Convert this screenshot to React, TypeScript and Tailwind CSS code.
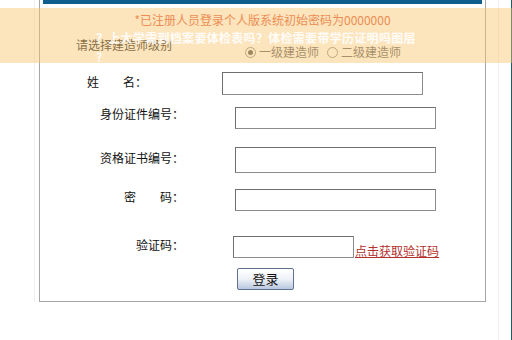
import React from 'react';

const font = { fontFamily: '"Noto Sans CJK SC", "Liberation Sans", sans-serif' };

const inputCls = 'border border-[#8c8c8c] border-t-[#6f6f6f] border-l-[#6f6f6f] bg-white';

const Radio = ({ checked }: { checked?: boolean }) => (
  <span className="inline-flex w-[11px] h-[11px] rounded-full border border-[#8e8e8e] bg-white items-center justify-center mr-[3px]">
    {checked && <span className="w-[5px] h-[5px] rounded-full bg-[#555]" />}
  </span>
);

export default function App() {
  return (
    <div className="relative w-[512px] h-[340px] bg-white overflow-hidden text-[12px]" style={font}>
      {/* login box */}
      <div className="ml-[39px] w-[447px] border-x border-b border-[#a6a6a6] pb-[11px]">
        <div className="mx-[3px] h-[4px] bg-[#0f5e8e]" />

        <div className="mt-[9px] h-[14px] leading-[14px] text-center text-[#e2603c]">
          *已注册人员登录个人版系统初始密码为0000000
        </div>

        <div className="mt-[11px] flex items-start">
          <div className="ml-[36px] leading-[14px] text-[#2a2a2a]">请选择建造师级别</div>
          <div className="ml-[73px] mt-[7px] flex items-center leading-[14px] text-[#666]">
            <Radio checked />
            <span>一级建造师</span>
            <span className="ml-[8px]" />
            <Radio />
            <span>二级建造师</span>
          </div>
        </div>

        {/* 姓名 */}
        <div className="mt-[13px] flex items-start">
          <div className="w-[182px] pl-[47px] mt-[3px] leading-[14px] text-[#111]">姓　　名：</div>
          <div className={`w-[201px] h-[23px] ${inputCls}`} />
        </div>

        {/* 身份证件编号 */}
        <div className="mt-[12px] flex items-start">
          <div className="w-[195px] pr-[51px] text-right leading-[14px] text-[#111]">身份证件编号：</div>
          <div className={`w-[201px] h-[22px] ${inputCls}`} />
        </div>

        {/* 资格证书编号 */}
        <div className="mt-[18px] flex items-start">
          <div className="w-[195px] pr-[51px] mt-[4px] text-right leading-[14px] text-[#111]">资格证书编号：</div>
          <div className={`w-[201px] h-[26px] ${inputCls}`} />
        </div>

        {/* 密码 */}
        <div className="mt-[16px] flex items-start">
          <div className="w-[195px] pr-[51px] mt-[1px] text-right leading-[14px] text-[#111]">密　　码：</div>
          <div className={`w-[201px] h-[22px] ${inputCls}`} />
        </div>

        {/* 验证码 */}
        <div className="mt-[25px] flex items-start">
          <div className="w-[193px] pr-[49px] mt-[2px] text-right leading-[14px] text-[#111]">验证码：</div>
          <div className={`w-[121px] h-[22px] ${inputCls}`} />
          <a className="ml-[1px] mt-[8px] leading-[14px] text-[#b3302c] underline">点击获取验证码</a>
        </div>

        <div className="mt-[10px] pl-[197px]">
          <button
            className="w-[57px] h-[22px] rounded-[2px] border border-[#5f7191] bg-gradient-to-b from-[#ffffff] via-[#eef2f8] to-[#b9c7de] text-[13px] leading-[20px] text-[#111]"
            style={font}
          >
            登录
          </button>
        </div>
      </div>

      {/* side lines */}
      <div className="absolute left-[34px] top-0 w-px h-[302px] bg-[#f0f0f0]" />
      <div className="absolute left-[498px] top-0 w-px h-[340px] bg-[#f7eeee]" />
      <div className="absolute right-0 top-0 w-px h-[340px] bg-[#1e5c6a]" />

      {/* peach overlay band */}
      <div className="absolute left-0 right-0 top-[8px] h-[55px] bg-[rgba(249,196,108,0.45)]">
        <div className="absolute left-[96px] top-[23px] leading-[14px] font-bold text-white/90 whitespace-nowrap tracking-[0.3px]">
          ？上大学需到档案要体检表吗？体检需要带学历证明吗图层
        </div>
        <div className="absolute left-[96px] top-[43px] leading-[12px] font-bold text-white/90">?</div>
      </div>
    </div>
  );
}
